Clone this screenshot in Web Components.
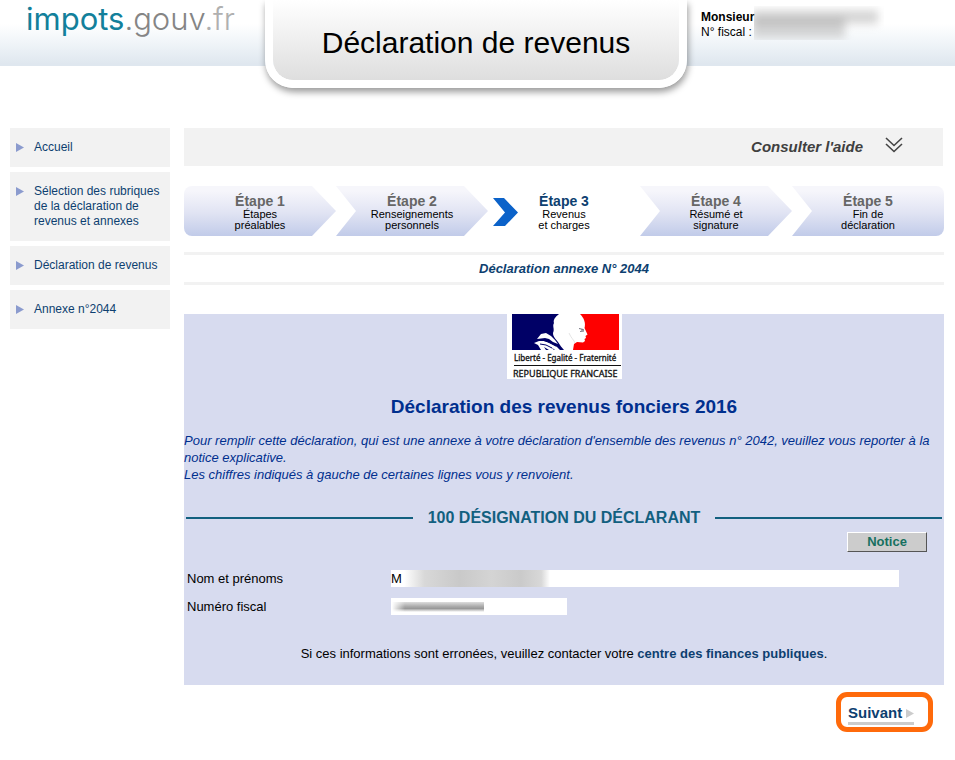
<!DOCTYPE html>
<html lang="fr">
<head>
<meta charset="utf-8">
<title>impots.gouv.fr - Déclaration de revenus</title>
<meta name="viewport" content="width=device-width, initial-scale=1">
<style>
  body { margin: 0; background: #fff; color: #000; font: 12px/15px "Liberation Sans", Arial, sans-serif;
    --navy: #0d3f70; --panel: #d7dbef; --grey: #f2f2f2; --teal: #12607f; }
</style>
</head>
<body>
<tax-page>
  <site-header slot="header" heading="Déclaration de revenus"></site-header>
  <side-nav slot="nav">
    <nav-entry>Accueil</nav-entry>
    <nav-entry>Sélection des rubriques de la déclaration de revenus et annexes</nav-entry>
    <nav-entry>Déclaration de revenus</nav-entry>
    <nav-entry>Annexe n°2044</nav-entry>
  </side-nav>
  <help-bar>Consulter l'aide</help-bar>
  <step-list>
    <step-item class="first" name="Étape 1">Étapes<br>préalables</step-item>
    <step-item name="Étape 2">Renseignements<br>personnels</step-item>
    <step-item active name="Étape 3">Revenus<br>et charges</step-item>
    <step-item name="Étape 4">Résumé et<br>signature</step-item>
    <step-item class="last" name="Étape 5">Fin de<br>déclaration</step-item>
  </step-list>
  <annex-title>Déclaration annexe N° 2044</annex-title>
  <form-panel heading="Déclaration des revenus fonciers 2016">
    <span slot="intro">Pour remplir cette déclaration, qui est une annexe à votre déclaration d'ensemble des revenus n° 2042, veuillez vous reporter à la notice explicative.<br>Les chiffres indiqués à gauche de certaines lignes vous y renvoient.</span>
    <section-title>100 DÉSIGNATION DU DÉCLARANT</section-title>
    <notice-button>Notice</notice-button>
    <form-field label="Nom et prénoms" value="M"></form-field>
    <form-field label="Numéro fiscal" short></form-field>
    <contact-note>centre des finances publiques</contact-note>
  </form-panel>
  <next-button>Suivant</next-button>
</tax-page>

<script>
const define = (name, html, setup) => {
  const tpl = document.createElement('template');
  tpl.innerHTML = html;
  customElements.define(name, class extends HTMLElement {
    constructor() {
      super();
      this.attachShadow({ mode: 'open' }).append(tpl.content.cloneNode(true));
    }
    connectedCallback() { if (setup) setup(this, this.shadowRoot); }
  });
};

define('tax-page', `
  <style>
    :host { display: block; }
    .cols { display: grid; grid-template-columns: 160px minmax(0, 1fr); gap: 14px; align-items: start; padding: 0 11px 28px 10px; }
    main { display: flex; flex-direction: column; }
  </style>
  <slot name="header"></slot>
  <div class="cols"><slot name="nav"></slot><main><slot></slot></main></div>`);

define('site-header', `
  <style>
    :host { display: block; padding-bottom: 40px; }
    header { display: grid; grid-template-columns: minmax(0, 1fr) 422px minmax(0, 1fr); align-items: start; padding-right: 3px;
      background: linear-gradient(#fff 24px, #eff4f8 44px, #dfe7ef 64px) 0 0 / 100% 66px no-repeat; }
    .logo { justify-self: start; margin-left: 26px; font: 300 31px/38px Inter, sans-serif; color: #858585; text-decoration: none; }
    .logo b { font-weight: 400; color: #13809b; }
    .logo i { font-style: normal; color: #b0b0b0; }
    h1 { margin: 0; box-sizing: border-box; border: solid #fff; border-width: 0 8px 8px; border-radius: 0 0 28px 28px;
      padding: 25px 0 19px; text-align: center; font-size: 30px; line-height: 36px; font-weight: 400;
      background: linear-gradient(#fff, #f2f2f2 40%, #dedede) padding-box; box-shadow: 1px 4px 7px #0006; clip-path: inset(0 -16px -16px -16px); }
    .user { padding: 10px 0 0 14px; display: grid; grid-template-columns: auto 130px; justify-content: start; }
    p { margin: 0; }
    .mask { grid-area: 1 / 2 / 3 / 3; display: grid; overflow: hidden; margin-top: -4px; }
    .mask i { filter: blur(4px); margin: 4px 6px 0 -2px;
      background: linear-gradient(#9996, #9996) 0 0 / 100% 14px no-repeat, linear-gradient(#9997, #9997) 0 8px / 74% 9px no-repeat, linear-gradient(#bbb9, #bbb9) 0 17px / 74% 11px no-repeat; }
  </style>
  <header>
    <a class="logo" href="#"><b>impots</b>.gouv<i>.fr</i></a>
    <h1></h1>
    <div class="user"><p><strong>Monsieur</strong></p><p>N° fiscal :</p><span class="mask"><i></i></span></div>
  </header>`,
  (el, root) => { root.querySelector('h1').textContent = el.getAttribute('heading'); });

define('side-nav', `
  <style>nav { display: grid; gap: 5px; }</style>
  <nav><slot></slot></nav>`);

define('nav-entry', `
  <style>
    :host { display: block; background: var(--grey); }
    a { display: flex; gap: 10px; padding: 12px 4px 12px 6px; color: var(--navy); text-decoration: none; }
    svg { flex: none; margin-top: 3px; }
  </style>
  <a href="#"><svg width="8" height="9" viewBox="0 0 8 9"><path d="M0 0L8 4.5L0 9Z" fill="#8b9bce"/></svg><span><slot></slot></span></a>`);

define('help-bar', `
  <style>
    :host { display: flex; justify-content: flex-end; background: var(--grey); padding: 0 40px; margin-right: 1px; }
    button { display: flex; align-items: center; gap: 22px; height: 38px; padding: 0; border: 0; background: none; color: #404040; font: italic 700 15px/18px "Liberation Sans", Arial, sans-serif; }
    svg { margin-top: -4px; }
  </style>
  <button type="button"><slot></slot><svg width="18" height="18" viewBox="0 0 18 18" fill="none" stroke="#444" stroke-width="1.6"><path d="M1 2L9 9.500L17 2M1 8L9 15.500L17 8"/></svg></button>`);

define('step-list', `
  <style>
    :host { display: block; margin-top: 20px; }
    div { display: grid; grid-template-columns: repeat(5, minmax(0, 1fr)); }
  </style>
  <div role="list"><slot></slot></div>`);

define('step-item', `
  <style>
    :host { display: block; position: relative; box-sizing: border-box; height: 50px; padding-top: 7px; text-align: center; font-size: 11px; line-height: 11px;
      background: linear-gradient(#f6f6fb 10%, #e0e3f3 55%, #c1cbe9);
      clip-path: polygon(0 0, calc(100% - 24px) 0, 100% 50%, calc(100% - 24px) 100%, 0 100%, 20px 50%); }
    :host(.first) { border-radius: 8px 0 0 8px; clip-path: polygon(0 0, calc(100% - 24px) 0, 100% 50%, calc(100% - 24px) 100%, 0 100%); }
    :host(.last) { border-radius: 0 8px 8px 0; clip-path: polygon(0 0, 100% 0, 100% 100%, 0 100%, 20px 50%); }
    :host([active]) { background: none; clip-path: none; }
    h2 { margin: 0; font-size: 14px; line-height: 16px; color: #666; }
    :host([active]) h2 { color: var(--navy); }
    svg { display: none; position: absolute; left: 5px; top: 12px; }
    :host([active]) svg { display: block; }
  </style>
  <svg width="25" height="28" viewBox="0 0 25 28"><path d="M0 0H11L25 14.500L12 28H0L12 14.500Z" fill="#0b62c9"/></svg>
  <h2></h2><slot></slot>`,
  (el, root) => { el.setAttribute('role', 'listitem'); root.querySelector('h2').textContent = el.getAttribute('name'); });

define('annex-title', `
  <style>
    :host { display: block; margin-top: 16px; border: solid var(--grey); border-width: 3px 0; }
    h2 { margin: 0; text-align: center; font: italic 700 13px/27px "Liberation Sans", Arial, sans-serif; color: var(--navy); }
  </style>
  <h2><slot></slot></h2>`);

define('republic-logo', `
  <style>
    :host { display: block; }
    svg { display: block; margin: auto; }
    text { font-family: "Noto Sans", sans-serif; fill: #111; }
  </style>
  <svg width="115" height="65" viewBox="0 0 115 65" role="img" aria-label="République française">
    <path fill="#fff" d="M0 0H115V65H0Z"/>
    <path fill="#000066" d="M5 0H52C48 3 46 6 47 9C45 12 48 15 46 19C46 23 49 25 51 28C53 31 55 34 57 36H5Z"/>
    <path fill="#fe0000" d="M73 0H112V36H66L67 30L70 28L76 28.500L78 27L77.500 25L79 24L78.500 22L80.500 20.500L77.500 14C79 9 77 4 73 0Z"/>
    <path fill="#fff" d="M30 25L34 20L39 19L44 22L48 26L51 30L46 28L42 25L38 24Z"/>
    <path fill="#fff" d="M27 29L32 27L38 27L43 29L50 33L53 36H48L44 33L47 36H42L37 33L39 36H34L31 31Z"/>
    <path fill="none" stroke="#000066" d="M35 26L41 28L49 32M33 30L39 31L45 34"/>
    <path fill="none" stroke="#556" stroke-width=".8" d="M72 14.500L76.500 15.500M73 17.500L77 17M74 16H77"/>
    <path fill="none" stroke="#ddd" stroke-width=".8" d="M62 19C64 24 67 26 68 29"/>
    <text x="7" y="47" font-size="8" stroke="#111" stroke-width=".3">Liberté - Egalité - Fraternité</text>
    <path stroke="#111" d="M7 51.500H114"/>
    <text x="6" y="63" font-size="9" stroke="#111" stroke-width=".3">REPUBLIQUE FRANCAISE</text>
  </svg>`);

define('form-panel', `
  <style>
    :host { display: flex; flex-direction: column; margin-top: 29px; padding-bottom: 23px; background: var(--panel); }
    h2 { margin: 16px 0 0; text-align: center; font-size: 19px; line-height: 24px; color: #002f8e; }
    p { margin: 13px 0 0; font-style: italic; font-size: 13px; line-height: 17px; color: #002f8e; }
  </style>
  <republic-logo></republic-logo><h2></h2><p><slot name="intro"></slot></p><slot></slot>`,
  (el, root) => { root.querySelector('h2').textContent = el.getAttribute('heading'); });

define('section-title', `
  <style>
    :host { display: block; padding: 25px 2px 0; }
    h3 { display: flex; align-items: center; gap: 15px; margin: 0; font-size: 16px; line-height: 20px; color: var(--teal); }
    h3::before, h3::after { content: ""; flex: 1; height: 2px; background: var(--teal); }
  </style>
  <h3><slot></slot></h3>`);

define('notice-button', `
  <style>
    :host { display: flex; justify-content: flex-end; margin: 4px 17px 18px 0; }
    button { width: 80px; height: 20px; padding: 0; border: 1px solid; border-color: #fff #555 #555 #fff; background: #ccc; color: #17705f; font: 700 13px/16px "Liberation Sans", Arial, sans-serif; }
  </style>
  <button type="button"><slot></slot></button>`);

define('form-field', `
  <style>
    :host { display: grid; grid-template-columns: 204px minmax(0, 1fr); align-items: center; padding: 0 45px 0 3px; font-size: 13px; }
    :host([short]) { margin-top: 11px; }
    label { line-height: 17px; }
    input { box-sizing: border-box; width: 100%; height: 17px; padding: 0; border: 0; border-radius: 0; background-color: #fff; font: 13px/17px "Liberation Sans", Arial, sans-serif;
      background-image: linear-gradient(90deg, #eee0, #d8d8d8 14%, #c9c9c9 38%, #d4d4d4 60%, #cacaca 80%, #d8d8d8 94%, #eee0);
      background-size: 146px 17px; background-position: 13px 0; background-repeat: no-repeat; }
    :host([short]) input { width: 176px; background-image: linear-gradient(90deg, #fff, #fff0 14%), linear-gradient(#ddd, #aaa 45%, #999 65%, #fff); background-size: 92px 10px; background-position: 1px 4px; }
  </style>
  <label for="f"></label><input id="f" type="text" readonly>`,
  (el, root) => {
    root.querySelector('label').textContent = el.getAttribute('label');
    root.querySelector('input').value = el.getAttribute('value') || '';
  });

define('contact-note', `
  <style>
    :host { display: block; margin-top: 30px; text-align: center; font-size: 13px; line-height: 17px; }
    a { color: var(--navy); font-weight: 700; text-decoration: none; }
  </style>
  Si ces informations sont erronées, veuillez contacter votre <a href="#"><slot></slot></a>.`);

define('next-button', `
  <style>
    :host { display: flex; justify-content: flex-end; margin: 7px 11px 0 0; }
    button { box-sizing: border-box; width: 97px; height: 40px; padding: 5px 0 0 7px; border: 5px solid #ff6a0b; border-radius: 11px; background: #fff; text-align: left; color: var(--navy); font: 700 15px/18px "Liberation Sans", Arial, sans-serif; }
    span { display: inline-flex; align-items: center; gap: 4px; border-bottom: 3px solid #ccc; }
  </style>
  <button type="button"><span><slot></slot><svg width="8" height="9" viewBox="0 0 8 9"><path d="M0 0L8 4.500L0 9Z" fill="#ccc"/></svg></span></button>`);
</script>
</body>
</html>
